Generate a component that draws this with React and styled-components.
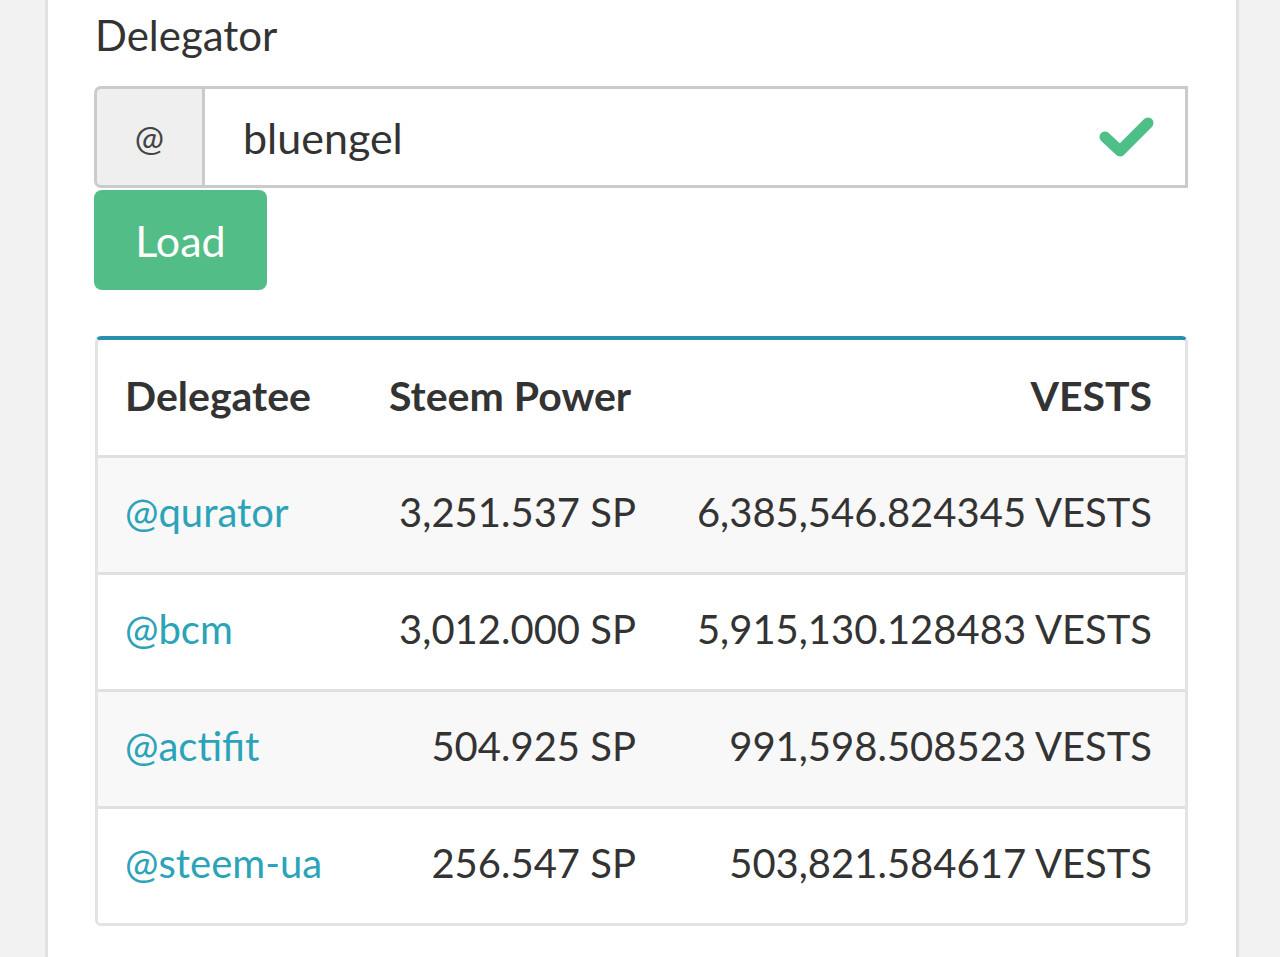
import React from 'react';
import styled, { createGlobalStyle } from 'styled-components';

const GlobalStyle = createGlobalStyle`
  html, body {
    margin: 0;
    padding: 0;
    background: #f2f2f2;
    font-family: Lato, "Open Sans", sans-serif;
    color: #333;
  }
`;

const Page = styled.div`
  margin-left: 45px;
  width: 1194px;
  min-height: 957px;
  background: #fff;
  border-left: 3px solid #e2e2e2;
  border-right: 3px solid #e2e2e2;
  padding: 6px 48px 0 46px;
  box-sizing: border-box;
`;

const Label = styled.div`
  font-size: 42px;
  line-height: 58px;
  color: #333;
  margin-left: 1px;
`;

const InputGroup = styled.div`
  display: flex;
  height: 102px;
  margin-top: 22px;
`;

const Addon = styled.div`
  width: 111px;
  box-sizing: border-box;
  display: flex;
  align-items: center;
  justify-content: center;
  background: #efefef;
  border: 3px solid #cbcbcb;
  border-radius: 7px 0 0 7px;
  font-size: 35px;
  color: #444;
`;

const Field = styled.div`
  flex: 1;
  display: flex;
  align-items: center;
  justify-content: space-between;
  border: 3px solid #cbcbcb;
  border-left: none;
  padding: 0 30px 0 38px;
  font-size: 43px;
  color: #333;
`;

const Button = styled.button`
  margin-top: 2px;
  width: 173px;
  height: 100px;
  border: none;
  border-radius: 8px;
  background: #52bd87;
  color: #fff;
  font-family: Lato, "Open Sans", sans-serif;
  font-size: 43px;
  padding: 0;
`;

const Panel = styled.div`
  margin-top: 46px;
  margin-left: 1px;
  border: 3px solid #e3e3e3;
  border-top: 4px solid #2a8fae;
  border-radius: 6px;
  overflow: hidden;
`;

const Row = styled.div`
  display: grid;
  grid-template-columns: 264px 247px 1fr;
  align-items: center;
  height: ${p => (p.$head ? 115 : 117)}px;
  padding: 0 33px ${p => (p.$head ? 4 : 6)}px 27px;
  box-sizing: border-box;
  background: ${p => (p.$striped ? '#f8f8f8' : '#fff')};
  border-top: ${p => (p.$head ? 'none' : '3px solid #e0e0e0')};
  font-size: ${p => (p.$head ? 41 : 40)}px;
  font-weight: ${p => (p.$head ? 700 : 400)};
  color: #333;
`;

const Cell = styled.div`
  text-align: ${p => (p.$right ? 'right' : 'left')};
  white-space: nowrap;
`;

const Link = styled.a`
  color: #2ba3b9;
  text-decoration: none;
`;

const Check = () => (
  <svg width="56" height="44" viewBox="0 0 56 44">
    <path d="M6 22 L21 36 L49 8" fill="none" stroke="#4fbf88" strokeWidth="11" strokeLinecap="round" strokeLinejoin="round" />
  </svg>
);

const rows = [
  ['@qurator', '3,251.537 SP', '6,385,546.824345 VESTS'],
  ['@bcm', '3,012.000 SP', '5,915,130.128483 VESTS'],
  ['@actifit', '504.925 SP', '991,598.508523 VESTS'],
  ['@steem-ua', '256.547 SP', '503,821.584617 VESTS'],
];

export default function App() {
  return (
    <>
      <GlobalStyle />
      <Page>
        <Label>Delegator</Label>
        <InputGroup>
          <Addon>@</Addon>
          <Field>
            <span>bluengel</span>
            <Check />
          </Field>
        </InputGroup>
        <Button>Load</Button>
        <Panel>
          <Row $head>
            <Cell>Delegatee</Cell>
            <Cell>Steem Power</Cell>
            <Cell $right>VESTS</Cell>
          </Row>
          {rows.map((r, i) => (
            <Row key={r[0]} $striped={i % 2 === 0}>
              <Cell><Link href="#">{r[0]}</Link></Cell>
              <Cell $right>{r[1]}</Cell>
              <Cell $right>{r[2]}</Cell>
            </Row>
          ))}
        </Panel>
      </Page>
    </>
  );
}
